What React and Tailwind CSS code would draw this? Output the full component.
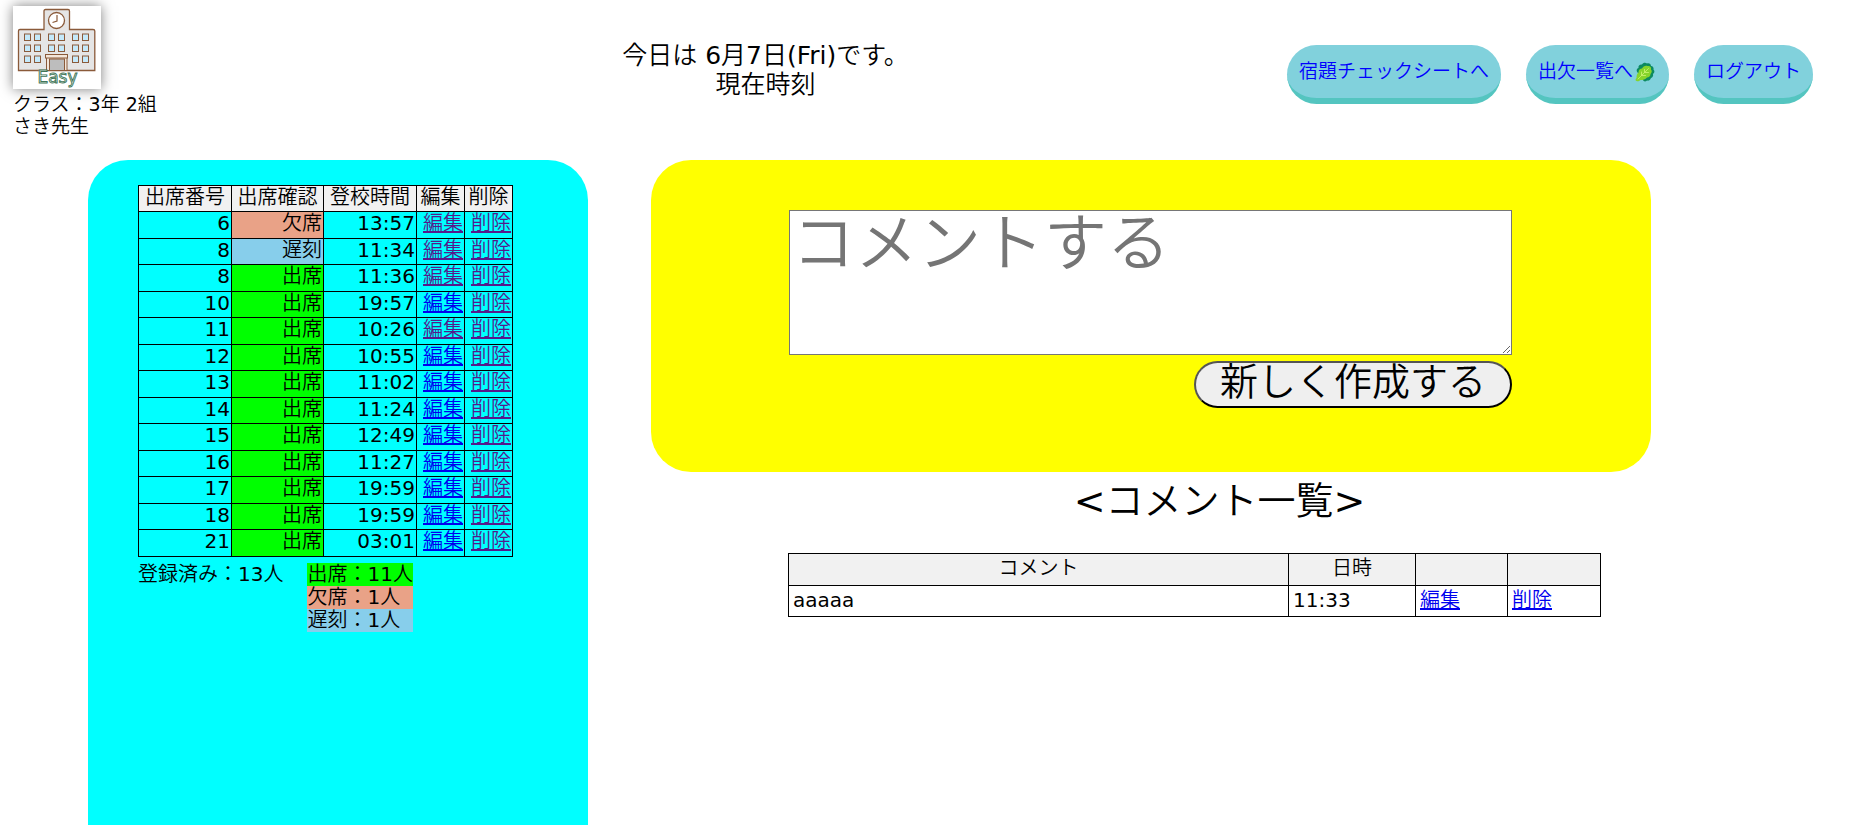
import React from "react";

const VISITED = "text-[#551a8b]";
const UNVISITED = "text-[#0000ee]";

const STATUS_BG = {
  欠席: "bg-[#e9a287]",
  遅刻: "bg-[#87ceeb]",
  出席: "bg-[#00ff00]",
};

const attendance = [
  { no: 6, status: "欠席", time: "13:57", seen: true },
  { no: 8, status: "遅刻", time: "11:34", seen: true },
  { no: 8, status: "出席", time: "11:36", seen: true },
  { no: 10, status: "出席", time: "19:57", seen: false },
  { no: 11, status: "出席", time: "10:26", seen: true },
  { no: 12, status: "出席", time: "10:55", seen: false },
  { no: 13, status: "出席", time: "11:02", seen: false },
  { no: 14, status: "出席", time: "11:24", seen: false },
  { no: 15, status: "出席", time: "12:49", seen: false },
  { no: 16, status: "出席", time: "11:27", seen: false },
  { no: 17, status: "出席", time: "19:59", seen: false },
  { no: 18, status: "出席", time: "19:59", seen: false },
  { no: 21, status: "出席", time: "03:01", seen: false },
];

const comments = [{ text: "aaaaa", time: "11:33" }];

function SchoolLogo() {
  const windows = [];
  for (const y of [28, 39, 50]) {
    for (const x of [11.5, 21.5, 35.5, 45.5, 59.5, 69.5]) {
      if (y === 50 && (x === 35.5 || x === 45.5)) continue;
      windows.push([x, y]);
    }
  }
  return (
    <svg viewBox="0 0 88 83" className="block h-[83px] w-[88px]">
      <path
        d="M5.500 64.500V25q0-1.500 1.500-1.500H31V5q0-1.500 1.500-1.500H55q1.500 0 1.500 1.500V23.500H80q1.800 0 1.800 1.500V64.500z"
        fill="#e5e5e5"
        stroke="#8a5a3a"
        strokeWidth="1.300"
      />
      <circle cx="43.500" cy="14.500" r="8" fill="#fff" stroke="#8a5a3a" strokeWidth="1.300" />
      <path d="M44 9V15l-4.500 1.500" fill="none" stroke="#8a5a3a" strokeWidth="1.200" />
      {windows.map(([x, y]) => (
        <rect
          key={x + "-" + y}
          x={x}
          y={y}
          width="6"
          height="6.500"
          fill="#c4e9fa"
          stroke="#8a5a3a"
          strokeWidth="1"
        />
      ))}
      <path d="M33.500 64.500V51H54V64.500z" fill="#f3e6da" stroke="#8a5a3a" strokeWidth="1" />
      <rect x="36.500" y="53" width="15" height="11.500" fill="#bdbdbd" stroke="#8a5a3a" strokeWidth="1" />
      <rect x="32.500" y="48.500" width="22" height="3.500" fill="#f3e6da" stroke="#8a5a3a" strokeWidth="1" />
      <text
        x="44.500"
        y="77"
        textAnchor="middle"
        fontFamily="'DejaVu Sans', sans-serif"
        fontSize="17"
        fontWeight="400"
        fill="#e4f1e8"
        stroke="#3f7558"
        strokeWidth="0.900"
      >
        Easy
      </text>
    </svg>
  );
}

function LeafIcon() {
  return (
    <svg viewBox="0 0 20 20" className="h-5 w-5" aria-hidden="true">
      <path
        d="M3 11C1 9 1.500 6.500 3.500 6C3 3.500 5 2 7 2.500C8 .5 10.500 0 12 1.500C14 .5 16 2 16 4C18 4 19 6 18.500 7.500C20 9 19.500 11 18 12C18.500 14 17.500 15.500 16 16C15.500 18 13.500 19 12 18.500C10.500 20 8.500 19.500 8 18z"
        fill="#0c8a60"
      />
      <path
        d="M1.500 19C0 18.500 .5 17 1.500 16C1.500 13.500 2 11.500 3.500 10.500C3.500 8 5 6.500 7 6.500C8 4.500 10.500 3 12.500 4C15 3.500 16.500 5 16 7.500C17.500 9 16.500 11 15.500 12C15.500 14 14 15.500 12 15.500C10.500 17.500 8 18 5.500 18C4 19.500 2.500 19.500 1.500 19z"
        fill="#86d42c"
      />
      <path
        d="M3 17L13.500 6.500M6.500 13.500V10M6.500 13.500h4M9.500 10.500V7.500M9.500 10.500h4"
        fill="none"
        stroke="#c5f06d"
        strokeWidth="0.900"
        strokeLinecap="round"
      />
    </svg>
  );
}

function NavButton({ children }) {
  return (
    <a
      href="#"
      className="flex h-[59px] items-center rounded-[30px] border-b-6 border-[#54c5c0] bg-[#81d1dc] px-3 text-[19px] whitespace-nowrap text-[#0000ff]"
    >
      {children}
    </a>
  );
}

function Attendance() {
  const cell = "border border-black py-0 align-top leading-[22px]";
  return (
    <section className="rounded-t-[40px] bg-[#00ffff] px-[50px] pt-[25px] text-[20px]">
      <table className="border-collapse text-right">
        <thead>
          <tr className="h-[26px] bg-[#f1f1f1] text-center">
            <th className={cell + " w-[93px] font-normal"}>出席番号</th>
            <th className={cell + " w-[92px] font-normal"}>出席確認</th>
            <th className={cell + " w-[93px] font-normal"}>登校時間</th>
            <th className={cell + " w-[48px] font-normal"}>編集</th>
            <th className={cell + " w-[48px] font-normal"}>削除</th>
          </tr>
        </thead>
        <tbody>
          {attendance.map((row, i) => (
            <tr key={i} className="odd:h-[27px] even:h-[26px]">
              <td className={cell + " pr-px"}>{row.no}</td>
              <td className={cell + " pr-px " + STATUS_BG[row.status]}>{row.status}</td>
              <td className={cell + " pr-px"}>{row.time}</td>
              <td className={cell + " pr-px"}>
                <a href="#" className={"underline " + (row.seen ? VISITED : UNVISITED)}>
                  編集
                </a>
              </td>
              <td className={cell + " pr-px"}>
                <a href="#" className={"underline " + VISITED}>
                  削除
                </a>
              </td>
            </tr>
          ))}
        </tbody>
      </table>
      <div className="mt-[6px] flex gap-6 leading-[23px]">
        <p>登録済み：13人</p>
        <div>
          <p className="bg-[#00ff00]">出席：11人</p>
          <p className="bg-[#e9a287]">欠席：1人</p>
          <p className="bg-[#87ceeb]">遅刻：1人</p>
        </div>
      </div>
    </section>
  );
}

function Comments() {
  const cell = "border border-black px-1 py-0 align-top leading-[29px]";
  return (
    <section>
      <form
        className="flex flex-col items-end rounded-[40px] bg-[#ffff00] pt-[50px] pr-[139px] pb-[64px] pl-[138px]"
        onSubmit={(e) => e.preventDefault()}
      >
        <textarea
          aria-label="コメント"
          placeholder="コメントする"
          className="block h-[145px] w-full resize border border-[#767676] bg-white p-[2px] text-[63px] leading-[62px] placeholder:text-[#757575]"
        />
        <button
          type="submit"
          className="mt-[6px] h-[47px] rounded-[25px] border-2 border-t-[#555] border-r-black border-b-black border-l-[#555] bg-[#efefef] px-6 pb-1 text-[38px] leading-[39px] whitespace-nowrap"
        >
          新しく作成する
        </button>
      </form>
      <div className="pl-[137px]">
        <h2 className="pt-[5px] text-center text-[38px] leading-[48px]">&lt;コメント一覧&gt;</h2>
        <div className="mt-[28px] pr-[50px]">
          <table className="w-full table-fixed border-collapse text-left text-[20px]">
            <colgroup>
              <col />
              <col className="w-[127px]" />
              <col className="w-[92px]" />
              <col className="w-[93px]" />
            </colgroup>
            <thead>
              <tr className="h-[32px] bg-[#f1f1f1] text-center">
                <th className={cell + " font-normal"}>コメント</th>
                <th className={cell + " font-normal"}>日時</th>
                <th className={cell} aria-label="編集"></th>
                <th className={cell} aria-label="削除"></th>
              </tr>
            </thead>
            <tbody>
              {comments.map((c, i) => (
                <tr key={i} className="h-[31px]">
                  <td className={cell}>{c.text}</td>
                  <td className={cell}>{c.time}</td>
                  <td className={cell}>
                    <a href="#" className={"underline " + UNVISITED}>
                      編集
                    </a>
                  </td>
                  <td className={cell}>
                    <a href="#" className={"underline " + UNVISITED}>
                      削除
                    </a>
                  </td>
                </tr>
              ))}
            </tbody>
          </table>
        </div>
      </div>
    </section>
  );
}

export default function App() {
  return (
    <div className="flex min-h-screen flex-col bg-white font-['DejaVu_Sans','Noto_Sans_CJK_JP_DemiLight','Noto_Sans_CJK_JP',sans-serif] font-normal text-black">
      <header className="flex items-start pr-12 pb-[23px] pl-[13px]">
        <div className="w-[231px] pt-[6px]">
          <div className="w-[88px] bg-white shadow-[0_0_12px_rgba(0,0,0,0.5)]">
            <SchoolLogo />
          </div>
          <div className="mt-[4px] text-[19px] leading-[22px]">
            <p>クラス：3年 2組</p>
            <p>さき先生</p>
          </div>
        </div>
        <h1 className="flex-1 pt-[41px] text-center text-[25px] leading-[29px]">
          今日は 6月7日(Fri)です。
          <br />
          現在時刻
        </h1>
        <nav className="flex gap-[25px] pt-[45px]">
          <NavButton>宿題チェックシートへ</NavButton>
          <NavButton>
            出欠一覧へ
            <span className="px-[2px]">
              <LeafIcon />
            </span>
          </NavButton>
          <NavButton>ログアウト</NavButton>
        </nav>
      </header>
      <main className="grid flex-1 grid-cols-[1fr_2fr] gap-[63px] pr-[210px] pl-[88px]">
        <Attendance />
        <Comments />
      </main>
    </div>
  );
}
